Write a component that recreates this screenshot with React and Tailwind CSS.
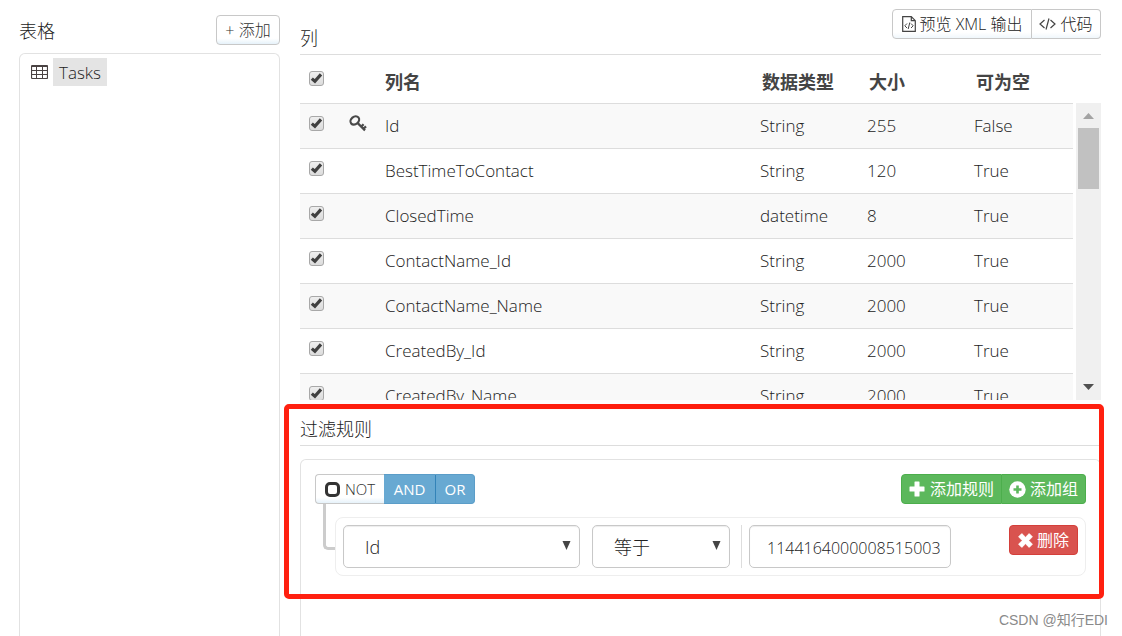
import { useState } from 'react'

const columns = [
  { name: 'Id', type: 'String', size: 255, nullable: 'False', isKey: true },
  { name: 'BestTimeToContact', type: 'String', size: 120, nullable: 'True' },
  { name: 'ClosedTime', type: 'datetime', size: 8, nullable: 'True' },
  { name: 'ContactName_Id', type: 'String', size: 2000, nullable: 'True' },
  { name: 'ContactName_Name', type: 'String', size: 2000, nullable: 'True' },
  { name: 'CreatedBy_Id', type: 'String', size: 2000, nullable: 'True' },
  { name: 'CreatedBy_Name', type: 'String', size: 2000, nullable: 'True' },
]

function TableIcon() {
  return (
    <svg className="w-[17px] h-[15px]" viewBox="0 0 17 15" fill="none" stroke="#4a4343" aria-hidden="true">
      <rect x="0.5" y="0.5" width="16" height="13" rx="1" strokeWidth="1.2" />
      <path d="M1 1.2h15" strokeWidth="1.600" />
      <path d="M1 5.5h15M1 9.5h15M5.500 1v13M11.500 1v13" />
    </svg>
  )
}

function KeyIcon() {
  return (
    <svg className="w-[18px] h-[18px]" viewBox="0 0 18 18" fill="none" stroke="#4a4a4a" strokeWidth="2.2" aria-hidden="true">
      <ellipse cx="5.8" cy="5.4" rx="4.700" ry="3.700" transform="rotate(-40 5.8 5.4)" />
      <path d="M8.2 7.600L16 15.400M12.2 11.600l2.400-2.400M14.600 13.800l2.400-2.400" />
    </svg>
  )
}

function FileCodeIcon() {
  return (
    <svg className="w-[14px] h-[16px]" viewBox="0 0 14 16" fill="none" stroke="#444" aria-hidden="true">
      <path d="M0.7 0.7h8.6l4 4v10.6H0.7zM9.3 0.7v4h4" strokeWidth="1.2" />
      <path d="M5 7.5L2.8 9.8 5 12M9 7.5l2.2 2.3L9 12M7.8 6.5L6.2 13" />
    </svg>
  )
}

function CodeIcon() {
  return (
    <svg className="w-[17px] h-[12px]" viewBox="0 0 17 12" fill="none" stroke="#444" strokeWidth="1.2" aria-hidden="true">
      <path d="M5.5 2L1 6l4.500 4M11.500 2L16 6l-4.500 4M10 0.500L7 11.500" />
    </svg>
  )
}

function PlusIcon() {
  return (
    <svg className="w-[16px] h-[16px]" viewBox="0 0 16 16" fill="#fff" aria-hidden="true">
      <path d="M6 0.5h4a.5.5 0 0 1 .5.5v4.500H15a.5.5 0 0 1 .5.5v4a.5.5 0 0 1-.5.5h-4.500V15a.5.5 0 0 1-.5.5H6a.5.5 0 0 1-.5-.5v-4.500H1a.5.5 0 0 1-.5-.5V6a.5.5 0 0 1 .5-.5h4.500V1a.5.5 0 0 1 .5-.5z" />
    </svg>
  )
}

function PlusCircleIcon() {
  return (
    <svg className="w-[17px] h-[17px]" viewBox="0 0 17 17" aria-hidden="true">
      <circle cx="8.5" cy="8.500" r="8.2" fill="#fff" />
      <path d="M8.500 4.500v8M4.500 8.500h8" stroke="#5cb85c" strokeWidth="2.600" />
    </svg>
  )
}

function RemoveIcon() {
  return (
    <svg className="w-[15px] h-[15px]" viewBox="0 0 15 15" fill="#fff" aria-hidden="true">
      <path d="M3.800 0.600L7.500 4.200 11.200 0.600 14.400 3.800 10.800 7.500 14.400 11.200 11.200 14.400 7.500 10.800 3.800 14.400 0.600 11.200 4.200 7.500 0.600 3.800z" stroke="#fff" strokeLinejoin="round" strokeWidth="0.800" />
    </svg>
  )
}

function CheckBox({ label }) {
  return (
    <span className="grid w-[15px] h-[15px]">
      <input
        type="checkbox"
        defaultChecked
        aria-label={label}
        className="peer [grid-area:1/1] appearance-none w-[15px] h-[15px] rounded-[3px] border border-[#a8a8a8] bg-linear-to-b from-[#eeeeee] to-[#dcdcdc]"
      />
      <svg className="[grid-area:1/1] w-[15px] h-[15px] pointer-events-none invisible peer-checked:visible" viewBox="0 0 15 15" fill="none" stroke="#404040" strokeWidth="3.200" aria-hidden="true">
        <path d="M2.800 7.600l3.100 2.700L12 3.400" />
      </svg>
    </span>
  )
}

function SelectBox({ label, className, options }) {
  return (
    <div className={`grid ${className}`}>
      <select
        aria-label={label}
        className="[grid-area:1/1] appearance-none w-full h-[43px] pt-[2px] pl-[21px] pr-8 rounded-[5px] border border-[#c8c8c8] bg-white shadow-[inset_0_1px_1px_rgba(0,0,0,0.075)] text-[18px]"
      >
        {options.map((option) => (
          <option key={option}>{option}</option>
        ))}
      </select>
      <svg className="[grid-area:1/1] justify-self-end w-[9px] h-[9px] mt-4 mr-[9px] pointer-events-none" viewBox="0 0 9 9" fill="#444" aria-hidden="true">
        <path d="M0.500 0h8L4.500 9z" />
      </svg>
    </div>
  )
}

function Sidebar() {
  return (
    <aside className="w-[261px] shrink-0 flex flex-col pt-[15px]">
      <div className="flex items-center justify-between h-[30px]">
        <h2 className="pt-[2px] text-[18px] leading-6">表格</h2>
        <button className="w-16 h-[30px] rounded-[4px] border border-[#c8c8c8] bg-linear-to-b from-white from-80% to-[#e6f2fa] text-[16px] leading-6 text-[#333]">
          + 添加
        </button>
      </div>
      <div className="grow mt-2 pt-1 pl-[11px] rounded-t-[6px] border border-b-0 border-[#e2e2e2]">
        <div className="flex items-center gap-[5px]">
          <TableIcon />
          <a href="#tasks" className="h-7 px-[6px] bg-[#e4e4e4] text-[17px] leading-[30px]">Tasks</a>
        </div>
      </div>
    </aside>
  )
}

function ColumnTable() {
  return (
    <div className="flex gap-[3px] h-[345px]">
      <div className="grow overflow-hidden">
        <table className="w-full table-fixed text-left text-[17px] leading-6">
          <thead>
            <tr className="h-12">
              <th className="w-[41px] pl-[9px] pt-4 align-top"><CheckBox label="全选" /></th>
              <th className="w-9"></th>
              <th className="pl-2 pt-[6px] text-[18px] text-[#444]">列名</th>
              <th className="w-[107px] pl-[10px] pt-[6px] text-[18px] text-[#444]">数据类型</th>
              <th className="w-[107px] pl-[10px] pt-[6px] text-[18px] text-[#444]">大小</th>
              <th className="w-[107px] pl-[10px] pt-[6px] text-[18px] text-[#444]">可为空</th>
            </tr>
          </thead>
          <tbody className="font-light">
            {columns.map((column) => (
              <tr key={column.name} className="h-[45px] border-t border-[#dddddd] odd:bg-[#f9f9f9]">
                <td className="pl-[9px] pt-3 align-top"><CheckBox label={column.name} /></td>
                <td className="pl-2 pt-[11px] align-top">{column.isKey && <KeyIcon />}</td>
                <td className="pl-2">{column.name}</td>
                <td className="pl-2">{column.type}</td>
                <td className="pl-2">{column.size}</td>
                <td className="pl-2">{column.nullable}</td>
              </tr>
            ))}
          </tbody>
        </table>
      </div>
      <div className="w-[25px] shrink-0 mt-12 flex flex-col items-center bg-[#f0f0f0]">
        <svg className="w-[11px] h-[25px]" viewBox="0 0 11 25" fill="#a3a3a3" aria-hidden="true">
          <path d="M0 16L5.500 10L11 16z" />
        </svg>
        <div className="w-[21px] h-[61px] bg-[#c1c1c1]"></div>
        <svg className="w-[11px] h-[25px] mt-auto" viewBox="0 0 11 25" fill="#505050" aria-hidden="true">
          <path d="M0 9L5.500 15L11 9z" />
        </svg>
      </div>
    </div>
  )
}

function FilterRules() {
  const [value, setValue] = useState('1144164000008515003')

  return (
    <section className="relative grow flex flex-col">
      <h2 className="h-[46px] pt-[17px] border-b border-[#dddddd] text-[18px] leading-6">过滤规则</h2>
      <div className="grow mt-[13px] p-[14px] rounded-t-[6px] border border-b-0 border-[#e2e2e2]">
        <div className="flex justify-between">
          <div className="flex h-[30px] text-[15px]">
            <button className="w-[69px] flex items-center justify-center gap-[5px] rounded-l-[4px] border border-r-0 border-[#c8c8c8] bg-linear-to-b from-white from-80% to-[#e6f2fa] text-[#333]">
              <span className="w-[15px] h-[15px] rounded-[5px] border-[3px] border-[#333]"></span>
              NOT
            </button>
            <button className="w-[51px] bg-[#68a9d2] border-y border-[#5b9dc8] font-normal text-white">AND</button>
            <button className="w-10 rounded-r-[4px] bg-[#68a9d2] border border-[#5b9dc8] border-l-[#3383b8] font-normal text-white">OR</button>
          </div>
          <div className="flex h-[30px] text-[16px] font-normal text-white">
            <button className="w-[101px] flex items-center justify-center gap-[5px] rounded-l-[4px] border border-[#4cae4c] bg-[#5cb85c]">
              <PlusIcon />
              添加规则
            </button>
            <button className="w-[84px] flex items-center justify-center gap-1 rounded-r-[4px] border border-l-0 border-[#4cae4c] bg-[#5cb85c]">
              <PlusCircleIcon />
              添加组
            </button>
          </div>
        </div>
        <div className="flex pl-2">
          <div className="w-3 h-[46px] shrink-0 rounded-bl-[5px] border-l-[3px] border-b-[3px] border-[#cccccc]"></div>
          <div className="grow h-[59px] mt-[13px] p-[7px] flex items-start rounded-[8px] border border-[#eeeeee] bg-white">
            <SelectBox label="列" className="w-[237px]" options={['Id', 'ClosedTime']} />
            <SelectBox label="运算符" className="w-[138px] ml-3" options={['等于', '不等于']} />
            <div className="ml-[11px] pl-[7px] border-l border-[#dddddd]">
              <input
                aria-label="值"
                value={value}
                onChange={(e) => setValue(e.target.value)}
                className="w-[202px] h-[43px] pt-[2px] pl-[17px] rounded-[5px] border border-[#c8c8c8] shadow-[inset_0_1px_1px_rgba(0,0,0,0.075)] text-[16px]"
              />
            </div>
            <button className="w-[69px] h-[30px] ml-auto flex items-center justify-center gap-1 rounded-[4px] border border-[#d43f3a] bg-[#d9534f] text-[16px] font-normal text-white">
              <RemoveIcon />
              删除
            </button>
          </div>
        </div>
      </div>
      {/* highlight frame over the filter area */}
      <div className="absolute -left-4 -right-[3px] top-1 h-[195px] rounded-[5px] border-[5px] border-[#ff2010] pointer-events-none"></div>
    </section>
  )
}

export default function App() {
  return (
    <div className="relative h-screen overflow-hidden flex gap-5 pl-[19px] pr-[21px] bg-white text-[#222] font-['Open_Sans','Noto_Sans_CJK_SC',sans-serif] font-light">
      <Sidebar />
      <main className="grow flex flex-col">
        <header className="h-[55px] pt-[9px] flex justify-between border-b border-[#dddddd]">
          <h2 className="pt-[17px] text-[18px] leading-6">列</h2>
          <div className="flex h-[30px] text-[16px]">
            <button className="w-[140px] flex items-center justify-center gap-1 rounded-l-[4px] border border-[#c8c8c8] bg-linear-to-b from-white from-80% to-[#f0f7fc] whitespace-nowrap">
              <FileCodeIcon />
              预览 XML 输出
            </button>
            <button className="w-[69px] flex items-center justify-center gap-1 rounded-r-[4px] border border-l-0 border-[#c8c8c8] bg-linear-to-b from-white from-80% to-[#f0f7fc]">
              <CodeIcon />
              代码
            </button>
          </div>
        </header>
        <ColumnTable />
        <FilterRules />
      </main>
      <div className="absolute right-[14px] bottom-[6px] font-['Liberation_Sans','Noto_Sans_CJK_SC',sans-serif] text-[14px] leading-5 font-normal text-[#8a8a8a]">CSDN @知行EDI</div>
    </div>
  )
}
